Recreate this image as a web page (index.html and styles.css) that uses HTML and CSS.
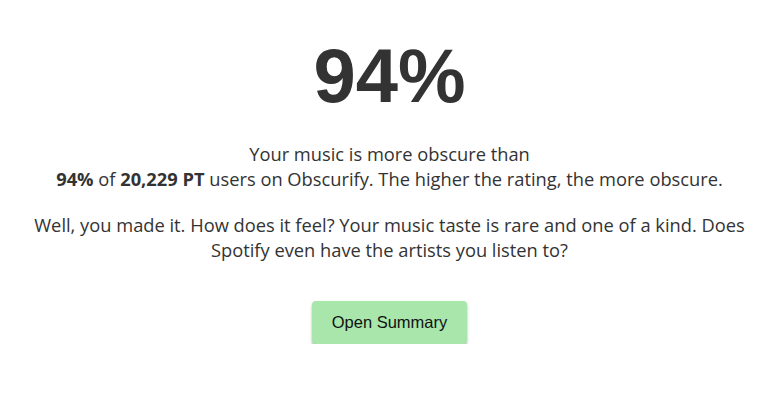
FILE: index.html
```html
<!DOCTYPE html>
<html>
<head>
<meta charset="utf-8">
<link rel="stylesheet" href="styles.css">
</head>
<body>
<main class="result">
  <h1 class="score">94%</h1>
  <p class="summary">Your music is more obscure than<br><strong>94%</strong> of <strong>20,229 PT</strong> users on Obscurify. The higher the rating, the more obscure.</p>
  <p class="comment">Well, you made it. How does it feel? Your music taste is rare and one of a kind. Does Spotify even have the artists you listen to?</p>
  <button class="open-btn">Open Summary</button>
</main>
</body>
</html>
```

FILE: styles.css
```css
html, body {
  margin: 0;
  padding: 0;
  background: #ffffff;
}
body {
  font-family: "Open Sans", "Noto Sans", sans-serif;
  color: #333333;
}
.result {
  display: flex;
  flex-direction: column;
  align-items: center;
  text-align: center;
  padding: 20px 18px 0 25px;
}
.score {
  font-family: "Liberation Sans", Arial, sans-serif;
  font-weight: 700;
  font-size: 76px;
  line-height: 1;
  margin: 0;
  padding-top: 18px;
  color: #333333;
}
.summary {
  font-size: 18.3px;
  line-height: 25px;
  margin: 27px 0 0;
}
.summary strong {
  font-weight: 700;
}
.comment {
  font-size: 18.3px;
  line-height: 25px;
  margin: 21px 0 0;
}
.open-btn {
  margin-top: 39px;
  width: 155px;
  height: 43px;
  border: none;
  border-radius: 4px;
  background: #a8e6ab;
  color: #111111;
  font-family: "Liberation Sans", Arial, sans-serif;
  font-size: 16.5px;
  box-shadow: 0 2px 3px rgba(0,0,0,0.3);
  cursor: pointer;
}
```
